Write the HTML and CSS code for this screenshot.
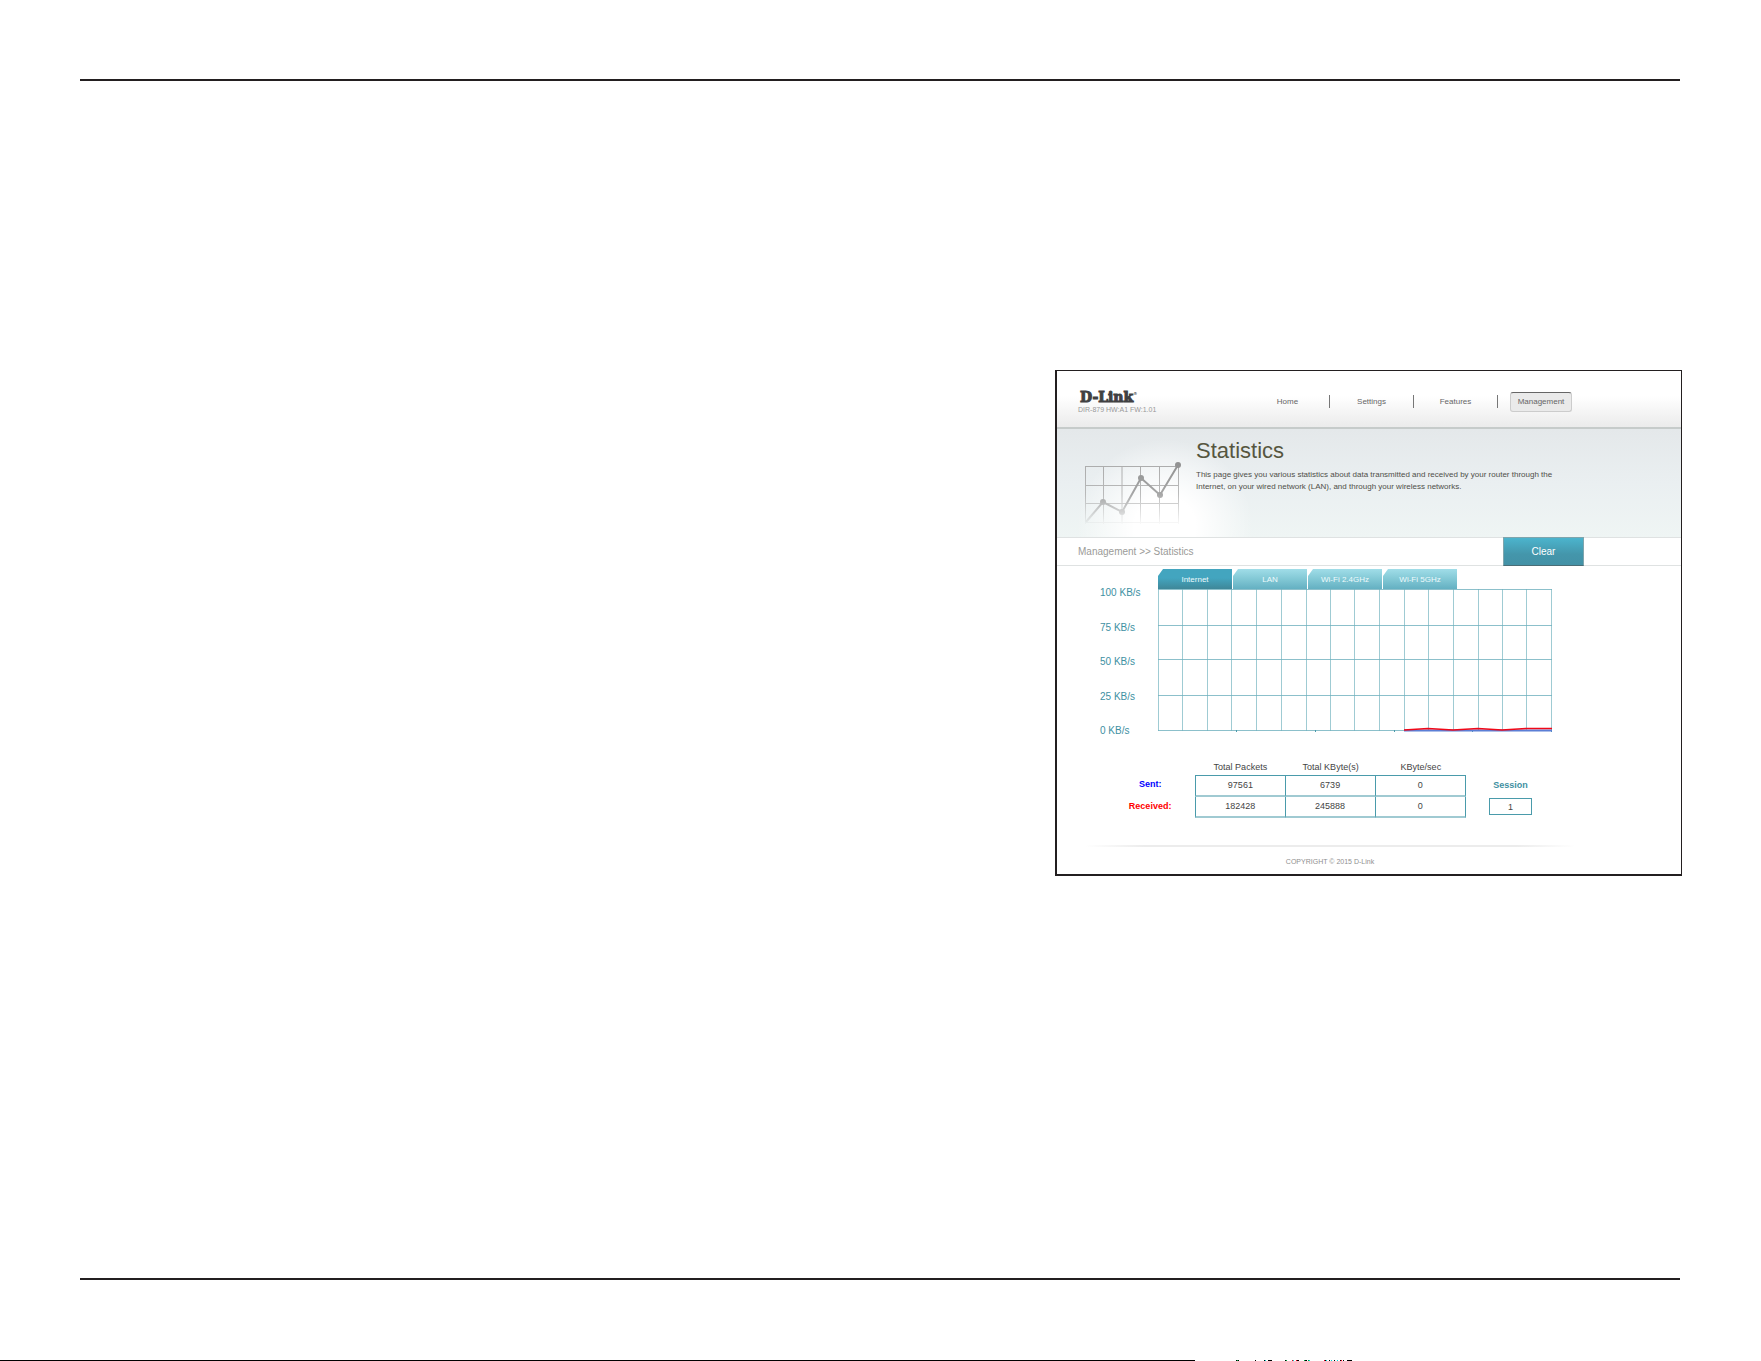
FILE: index.html
```html
<!DOCTYPE html>
<html lang="en">
<head>
<meta charset="utf-8">
<title>Statistics</title>
<link rel="stylesheet" href="styles.css">
</head>
<body>
<div class="sheet">
  <hr class="rule">
  <main class="sheet-body">
    <section class="panel">
      <header class="top">
        <div class="brand">
          <a class="logo" href="#">D-Link<span class="mark">®</span></a>
          <span class="model">DIR-879 HW:A1 FW:1.01</span>
        </div>
        <nav class="nav">
          <a href="#">Home</a>
          <a href="#">Settings</a>
          <a href="#">Features</a>
          <a href="#" class="current"><span>Management</span></a>
        </nav>
      </header>

      <div class="hero">
        <svg class="hero-icon" width="100" height="66" viewBox="0 0 100 66" aria-hidden="true">
          <defs>
            <linearGradient id="fade" x1="0" y1="0" x2="0" y2="1">
              <stop offset="0" stop-color="#fff"/>
              <stop offset=".5" stop-color="#fff" stop-opacity=".8"/>
              <stop offset="1" stop-color="#fff" stop-opacity="0"/>
            </linearGradient>
            <mask id="fademask" maskUnits="userSpaceOnUse" x="0" y="0" width="110" height="66">
              <rect width="110" height="66" fill="url(#fade)"/>
            </mask>
          </defs>
          <g mask="url(#fademask)">
            <path d="M7.500 5v58M25.500 5v58M44 5v58M62.500 5v58M81.500 5v58M100.500 5v58M7 5.500h93M7 24.500h93M7 42.500h93M7 61.500h93" stroke="#aaa" fill="none"/>
            <path d="M8 61L25 41L44 51L63 17L82 34L100 4" stroke="#909090" stroke-width="2" fill="none"/>
            <g fill="#909090"><circle cx="25" cy="41" r="3"/><circle cx="44" cy="51" r="3"/><circle cx="63" cy="17" r="3"/><circle cx="82" cy="34" r="3"/><circle cx="100" cy="4" r="3"/></g>
          </g>
        </svg>
        <div class="hero-text">
          <h1>Statistics</h1>
          <p>This page gives you various statistics about data transmitted and received by your router through the Internet, on your wired network (LAN), and through your wireless networks.</p>
        </div>
      </div>

      <div class="crumbs">
        <span>Management &gt;&gt; Statistics</span>
        <button type="button" class="clear">Clear</button>
      </div>

      <div class="graph">
        <div class="scale">
          <span>100 KB/s</span><span>75 KB/s</span><span>50 KB/s</span><span>25 KB/s</span><span>0 KB/s</span>
        </div>
        <div class="plot">
          <div class="tabs">
            <button type="button" class="tab active">Internet</button>
            <button type="button" class="tab">LAN</button>
            <button type="button" class="tab">Wi-Fi 2.4GHz</button>
            <button type="button" class="tab">Wi-Fi 5GHz</button>
          </div>
          <svg class="chart" width="394" height="143" viewBox="0 0 394 143" role="img" aria-label="Traffic">
            <path d="M.5 0v142M24.500 0v142M49.500 0v142M73.500 0v142M98.500 0v142M123.500 0v142M148.500 0v142M172.500 0v142M196.500 0v142M221.500 0v142M246.500 0v142M270.500 0v142M295.500 0v142M320.500 0v142M344.500 0v142M368.500 0v142M393.500 0v142" stroke="#9fcbd3"/>
            <path d="M0 .5h394M0 36.500h394M0 70.500h394M0 106.500h394M0 141.500h394" stroke="#6fb0be" stroke-opacity=".8"/>
            <path d="M78.500 141v2M157.500 141v2M236.500 141v2M314.500 141v2M393.500 141v2" stroke="#4c9aaa"/>
            <path d="M246 141.500H394" stroke="#5b7fd6" stroke-width="2"/>
            <path d="M246 141L270 139.500L295 141L320 139.500L344 141L368 139.500H394" stroke="#f00818" stroke-width="1.500" fill="none"/>
          </svg>
        </div>
      </div>

      <div class="totals">
        <table>
          <thead>
            <tr><td></td><th scope="col">Total Packets</th><th scope="col">Total KByte(s)</th><th scope="col">KByte/sec</th></tr>
          </thead>
          <tbody>
            <tr><th scope="row" class="sent">Sent:</th><td>97561</td><td>6739</td><td>0</td></tr>
            <tr><th scope="row" class="received">Received:</th><td>182428</td><td>245888</td><td>0</td></tr>
          </tbody>
        </table>
        <div class="session">
          <label for="session">Session</label>
          <input id="session" type="text" value="1" readonly>
        </div>
      </div>

      <footer class="foot">COPYRIGHT © 2015 D-Link</footer>
    </section>
  </main>
  <hr class="rule">
</div>
<div class="edge">
  <svg width="1353" height="1" viewBox="0 0 1353 1" aria-hidden="true">
    <path d="M0 .5H1195M1236 .5h3M1255 .5h1M1264 .5h1M1268 .5h4M1285 .5h2M1297 .5h2M1305 .5h2M1325 .5h1M1329 .5h1M1334 .5h1M1340 .5h2M1343 .5h1M1347 .5h5" stroke="#000"/>
    <path d="M1237 .5h1M1286 .5h1M1304 .5h1M1308 .5h1" stroke="#0a4"/>
    <path d="M1265 .5h1M1293 .5h1M1309 .5h1M1326 .5h1M1331 .5h1M1337 .5h1" stroke="#0dd"/>
    <path d="M1292 .5h1M1296 .5h1M1324 .5h1M1341 .5h1" stroke="#e02"/>
  </svg>
</div>
</body>
</html>
```
FILE: styles.css
```css
* { box-sizing: border-box; }
body {
  margin: 0;
  min-height: 100vh;
  display: flex;
  flex-direction: column;
  background: #fff;
  color: #444;
  font-family: "Liberation Sans", Arial, sans-serif;
  font-size: 8px;
}
a { color: inherit; text-decoration: none; }
button { border: 0; padding: 0; font-family: inherit; }

.sheet {
  flex: 1;
  display: flex;
  flex-direction: column;
  padding: 79px 79px 80px 80px;
}
.rule { width: calc(100% - 2px); height: 2px; margin: 0; border: 0; background: #231f20; }
.sheet-body { flex: 1; display: flex; justify-content: flex-end; align-items: flex-start; padding-top: 289px; }

.panel {
  width: 100%;
  max-width: 627px;
  border: solid #231f20;
  border-width: 1px 1px 2px 2px;
}
.top {
  display: flex;
  justify-content: space-between;
  height: 58px;
  padding: 0 97px 0 21px;
  background: linear-gradient(#fff 45%, #ebebeb);
  border-bottom: 2px solid #c6cbca;
}
.brand { display: flex; flex-direction: column; padding-top: 19px; }
.logo {
  padding-left: 2px;
  font: bold 14px/14px "DejaVu Serif", serif;
  color: #404042;
  -webkit-text-stroke: 1px #404042;
}
.mark { font-size: 4px; vertical-align: 7px; line-height: 1px; -webkit-text-stroke: 0; }
.model { font-size: 7px; line-height: 12px; color: #999; }
.nav { display: flex; align-items: flex-start; padding-top: 24px; }
.nav a { width: 84px; line-height: 13px; text-align: center; color: #666; border-right: 1px solid #777; }
.nav .current { border: 0; width: 86px; margin-top: -3px; }
.current span {
  display: block;
  width: 62px;
  margin: 0 auto;
  line-height: 18px;
  background: #eaeaea;
  border: 1px solid #ccc;
  border-top-color: #666;
  border-radius: 3px;
}

.hero {
  display: flex;
  height: 108px;
  padding: 0 98px 0 21px;
  background: radial-gradient(ellipse 88px 88px at 108px 98px, #fff 35%, transparent), linear-gradient(#e4e8ea, #eaeff1 50%, #eff5f4);
}
.hero-icon { flex: none; margin: 32px 18px 0 0; overflow: visible; }
.hero-text { padding-top: 10px; }
h1 { margin: 0; font-size: 22px; line-height: 24px; font-weight: normal; color: #56563f; }
p { margin: 6px 0 0; line-height: 12px; color: #4f4f49; }

.crumbs {
  display: flex;
  justify-content: space-between;
  align-items: center;
  height: 29px;
  padding: 0 97px 0 21px;
  border: solid #dfe2e2;
  border-width: 1px 0;
  font-size: 10px;
  color: #9b9b98;
}
.clear {
  width: 81px;
  height: 29px;
  margin: -1px 0;
  border: 1px solid #7fa5ad;
  border-bottom-color: #4a6d76;
  background: linear-gradient(#4cb4cd, #4496ab 60%, #4391a6);
  color: #fff;
  font-size: 10px;
}

.graph { display: flex; padding: 3px 0 0 43px; }
.scale { display: flex; flex-direction: column; justify-content: space-between; width: 58px; margin: 18px 0 -5px; font-size: 10px; line-height: 12px; color: #4090a2; }
.plot { display: flex; flex-direction: column; }
.tabs { display: flex; gap: 1px; }
.tab {
  width: 74px;
  height: 20px;
  color: #eefafc;
  font-size: 8px;
  background: linear-gradient(#a0dde8, #82c8d5 50%, #64b0c2);
  clip-path: polygon(5px 0, 100% 0, 100% 100%, 0 100%, 0 7px);
}
.tab.active { background: linear-gradient(#43a5bf 45%, #3f8799); }
.chart { display: block; }

.totals { display: flex; align-items: flex-start; padding: 28px 0 0 48px; font-size: 9px; }
table { border-collapse: separate; border-spacing: 0; table-layout: fixed; width: 361px; text-align: center; color: #444; }
td, th { padding: 0; width: 90px; font-weight: normal; }
thead td, thead th { height: 15px; line-height: 15px; }
tbody td, tbody th { height: 21px; line-height: 18px; vertical-align: top; }
tbody td { border: solid #a0cad2; border-width: 0 0 2px; border-right: 1px solid #4a9bab; }
tbody tr:first-child td { height: 22px; border-top: 1px solid #4a9bab; }
tbody td:nth-child(2) { border-left: 1px solid #4a9bab; }
tbody th { font-weight: bold; }
.sent { color: #00f; }
.received { color: #f00; }
.session { display: flex; flex-direction: column; align-items: center; margin: 19px 0 0 23px; }
.session label { font-weight: bold; line-height: 12px; color: #4090a2; }
.session input {
  width: 43px;
  height: 17px;
  margin-top: 7px;
  padding: 0;
  border: 1px solid #4a9bab;
  text-align: center;
  font: 9px "Liberation Sans", Arial, sans-serif;
  color: #444;
}

.foot {
  margin: 27px 106px 0 28px;
  padding: 12px 0 7px;
  font-size: 7px;
  line-height: 10px;
  text-align: center;
  color: #8f8f8f;
  background: linear-gradient(90deg, transparent, #ececec 12%, #ececec 88%, transparent) top / 100% 2px no-repeat;
}
.edge { height: 1px; overflow: hidden; }
.edge svg { display: block; }
```
